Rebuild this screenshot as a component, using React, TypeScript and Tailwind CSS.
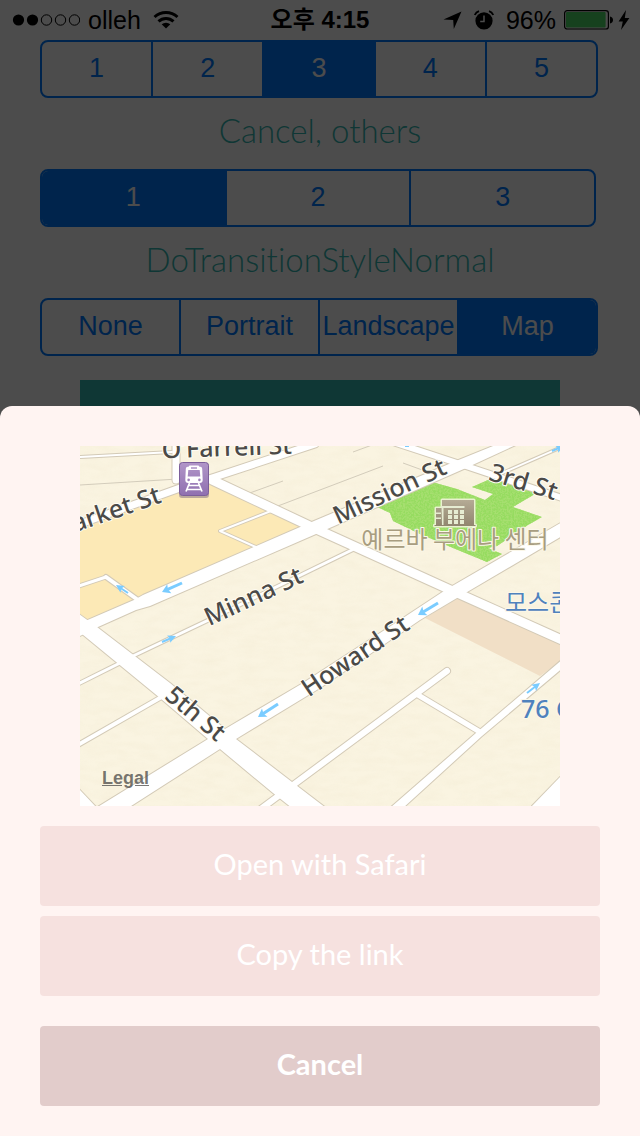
import { useState } from "react";

type Point = [number, number];

function SegmentedControl({
  label,
  options,
  initial,
  className,
}: {
  label: string;
  options: string[];
  initial: string;
  className: string;
}) {
  const [selected, setSelected] = useState(initial);
  return (
    <div
      role="group"
      aria-label={label}
      className={`flex h-[58px] overflow-hidden rounded-lg border-2 border-[#007aff] font-['Liberation_Sans',sans-serif] text-[27px] leading-8 ${className}`}
    >
      {options.map((option) => (
        <button
          key={option}
          type="button"
          aria-pressed={option === selected}
          onClick={() => setSelected(option)}
          className={`flex min-w-0 flex-1 basis-0 items-center justify-center border-r-2 border-[#007aff] pb-0.5 last:border-r-0 ${
            option === selected ? "bg-[#007aff] text-white" : "text-[#007aff]"
          }`}
        >
          {option}
        </button>
      ))}
    </div>
  );
}

function SectionTitle({ children }: { children: string }) {
  return (
    <h2 className="flex h-[71px] items-center justify-center pb-2 font-['Lato',sans-serif] text-[33px] leading-10 font-light text-[#35b7b1] [font-variant-ligatures:none]">
      {children}
    </h2>
  );
}

function StatusBar() {
  return (
    <header className="grid h-10 grid-cols-[1fr_auto_1fr] items-center font-['Liberation_Sans','Noto_Sans_CJK_KR',sans-serif] text-2xl leading-8 text-black">
      <div className="flex items-center gap-2 pl-3">
        <svg width="68" height="14" viewBox="0 0 68 14" aria-hidden="true">
          <circle cx="6.5" cy="7" r="5.6" />
          <circle cx="20.5" cy="7" r="5.6" />
          <g fill="none" stroke="currentColor">
            <circle cx="34.5" cy="7" r="5.2" />
            <circle cx="48.5" cy="7" r="5.2" />
            <circle cx="62.5" cy="7" r="5.2" />
          </g>
        </svg>
        <span className="text-[25px]">olleh</span>
        <svg width="28" height="20" viewBox="0 0 28 20" className="ml-1" aria-hidden="true">
          <g fill="none" stroke="currentColor" strokeWidth="3">
            <path d="M1.500 7a17.200 17.200 0 0 1 23 0" />
            <path d="M5.500 11.400a11 11 0 0 1 15 0" />
          </g>
          <path d="M13 18.600l-4.300-4.300a6.400 6.400 0 0 1 8.600 0z" />
        </svg>
      </div>
      <span className="font-bold">오후 4:15</span>
      <div className="flex items-center justify-end pr-2.5">
        <svg width="19" height="19" viewBox="0 0 19 19" aria-hidden="true">
          <path d="M18.5.5L10.800 18l-.6-8.900L.5 8.600z" />
        </svg>
        <svg width="20" height="20" viewBox="0 0 20 20" className="ml-3" aria-hidden="true">
          <circle cx="10" cy="10.800" r="8.600" />
          <path d="M.8 5A7 7 0 0 1 5 1.200M19.200 5A7 7 0 0 0 15 1.200" fill="none" stroke="currentColor" strokeWidth="1.800" />
          <path d="M10 5.600v5.800H6.200" fill="none" stroke="#fff" strokeWidth="1.500" />
        </svg>
        <span className="mr-2 ml-3 text-[25px]">96%</span>
        <svg width="50" height="20" viewBox="0 0 50 20" aria-hidden="true">
          <rect x=".6" y=".6" width="43.800" height="18.400" rx="2.600" fill="none" stroke="currentColor" strokeWidth="1.200" />
          <rect x="2" y="2" width="39.600" height="15.600" rx="1" fill="#4cd964" />
          <path d="M46 6.400q3 .8 3 3.500t-3 3.500z" />
        </svg>
        <svg width="12" height="20" viewBox="0 0 12 20" className="ml-1" aria-hidden="true">
          <path d="M8 0L.6 11.400h4.200L3 20l8.400-12H6.800z" />
        </svg>
      </div>
    </header>
  );
}

const thinRoads: { points: string; width: number }[] = [
  { points: "80,457 172,452", width: 2 },
  { points: "176,440 176,480", width: 7 },
  { points: "80,524 130,506 180,488 215,477 315,444", width: 7 },
  { points: "212,480 314,528 455,592 562,640", width: 9 },
  { points: "133,656 215,617 356,548", width: 3 },
  { points: "76,685 122,662", width: 3 },
  { points: "76,746 165,695", width: 4 },
  { points: "106,577 138,600", width: 4 },
  { points: "76,587 106,577", width: 3 },
  { points: "271,511 220,531 258,548", width: 2 },
  { points: "396,443 460,464 562,498", width: 6 },
  { points: "500,474 564,446", width: 2 },
  { points: "258,811 447,671", width: 6 },
  { points: "418,695 480,732", width: 5 },
];

const wideRoads = [
  "76,625 134,600 143,595 314,521 456,461 498,444 518,444 466,468 316,534 150,606 136,610 98,627 76,638",
  "96,808 208,739 225,729 303,683 400,620 447,589 564,521 564,535 457,598 420,620 320,688 236,739 220,749 128,808",
  "76,612 97,627 170,683 225,729 236,739 292,782 326,808 292,808 273,793 220,749 208,739 160,698 82,634 76,630",
  "390,808 476,733 564,658 564,667 482,736 403,808",
  "532,806 562,775 562,808 532,808",
  "78,788 97,808 78,808",
];

const arrows: { from: Point; to: Point; width: number }[] = [
  { from: [182, 583], to: [162, 592], width: 3 },
  { from: [438, 603], to: [418, 615], width: 3 },
  { from: [278, 704], to: [258, 717], width: 3 },
  { from: [128, 593], to: [116, 585], width: 2 },
  { from: [162, 642], to: [176, 636], width: 2 },
  { from: [527, 693], to: [540, 683], width: 2 },
  { from: [552, 451], to: [564, 446], width: 2 },
];

const streets: { name: string; x: number; y: number; angle: number }[] = [
  { name: "O’Farrell St", x: 227, y: 456, angle: -2 },
  { name: "Market St", x: 108, y: 521, angle: -19 },
  { name: "Mission St", x: 393, y: 499, angle: -25 },
  { name: "3rd St", x: 521, y: 490, angle: 17 },
  { name: "Minna St", x: 257, y: 604, angle: -25 },
  { name: "Howard St", x: 360, y: 663, angle: -34 },
  { name: "5th St", x: 190, y: 720, angle: 40 },
];

function DirectionArrow({ from, to, width }: { from: Point; to: Point; width: number }) {
  const length = Math.hypot(to[0] - from[0], to[1] - from[1]);
  const angle = (Math.atan2(to[1] - from[1], to[0] - from[0]) * 180) / Math.PI;
  return (
    <g transform={`translate(${from[0]} ${from[1]}) rotate(${angle})`} fill="#7accff">
      <rect x="0" y={-width / 2} width={length - 5} height={width} />
      <path d={`M${length} 0l-8 ${-width - 2}l1.5 ${width + 2}l-1.5 ${width + 2}z`} />
    </g>
  );
}

function StreetMap() {
  return (
    <svg viewBox="80 446 480 360" className="block w-full" role="img" aria-label="Street map">
      <defs>
        <filter id="paper" x="0" y="0" width="1" height="1">
          <feTurbulence type="fractalNoise" baseFrequency="0.05 0.14" numOctaves="3" seed="4" />
          <feColorMatrix values="0 0 0 0 0.91  0 0 0 0 0.85  0 0 0 0 0.68  0 0 0 1.5 -0.5" />
        </filter>
        <filter id="grass" x="0" y="0" width="1" height="1">
          <feTurbulence type="fractalNoise" baseFrequency="0.55" numOctaves="2" seed="2" result="noise" />
          <feColorMatrix in="noise" values="0 0 0 0 0.38  0 0 0 0 0.74  0 0 0 0 0.16  0 0 0 4 -1.5" result="specks" />
          <feComposite in="specks" in2="SourceGraphic" operator="in" result="blades" />
          <feMerge>
            <feMergeNode in="SourceGraphic" />
            <feMergeNode in="blades" />
          </feMerge>
        </filter>
        <linearGradient id="transit" x1="0" y1="0" x2="0" y2="1">
          <stop offset="0" stopColor="#b196c8" />
          <stop offset="1" stopColor="#9070b0" />
        </linearGradient>
        <linearGradient id="stone" x1="0" y1="0" x2="0" y2="1">
          <stop offset="0" stopColor="#b5ab95" />
          <stop offset="1" stopColor="#91866f" />
        </linearGradient>
      </defs>

      <rect x="80" y="446" width="480" height="360" fill="#faf4e1" />
      <rect x="80" y="446" width="480" height="360" filter="url(#paper)" opacity="0.6" />

      <polygon points="80,529 180,492 212,482 304,527 138,599 90,622 80,614" fill="#fce9b6" />
      <polygon points="457,598 560,643 560,662 540,676 425,618" fill="#f1dfc6" />
      <polygon
        points="375,506 423,483 432,482 457,489 485,500 493,494 472,487 497,476 540,491 513,507 542,517 528,525 497,546 488,548 502,554 487,562 453,548 420,534 393,521 390,513"
        fill="#96dc60"
        filter="url(#grass)"
      />

      <g fill="none" stroke="#d3ccbb">
        <path d="M80 485L178 479M247 494L283 481M270 509L383 466M353 452L383 441M403 463L425 471" />
      </g>
      <g fill="none" stroke="#d3cab7" strokeLinejoin="round" strokeLinecap="round">
        {thinRoads.map((road) => (
          <polyline key={road.points} points={road.points} strokeWidth={road.width + 2} />
        ))}
        {wideRoads.map((points) => (
          <polygon key={points} points={points} strokeWidth="2" />
        ))}
      </g>
      <g fill="none" stroke="#fff" strokeLinejoin="round" strokeLinecap="round">
        {thinRoads.map((road) => (
          <polyline key={road.points} points={road.points} strokeWidth={road.width} />
        ))}
      </g>
      <g fill="#fff">
        {wideRoads.map((points) => (
          <polygon key={points} points={points} />
        ))}
      </g>

      {arrows.map((arrow) => (
        <DirectionArrow key={arrow.from.join()} {...arrow} />
      ))}
      <rect x="405" y="446" width="4" height="1" fill="#7accff" />

      <g
        fontFamily="'Noto Sans', sans-serif"
        fontSize="25"
        fontWeight="500"
        fill="#4b4a48"
        stroke="#fffdf5"
        strokeWidth="2"
        strokeLinejoin="round"
        paintOrder="stroke"
        textAnchor="middle"
      >
        {streets.map((street) => (
          <text key={street.name} transform={`translate(${street.x} ${street.y}) rotate(${street.angle})`}>
            {street.name}
          </text>
        ))}
      </g>

      <g>
        <rect x="179" y="463" width="30" height="35" rx="3" fill="#6d5a7c" opacity="0.45" />
        <rect x="179.5" y="462.5" width="29" height="33" rx="3" fill="url(#transit)" stroke="#7c5f9b" />
        <path
          fillRule="evenodd"
          fill="#fff"
          d="M190 465.500h8q1 0 1.400 1.200h1q1.600 0 1.800 2l.5 11.300q0 3-3 3h-11.400q-3 0-3-3l.5-11.300q.2-2 1.800-2h1q.4-1.200 1.400-1.200zM188.300 470l-.6 6.400h12.600l-.6-6.400zM188.600 478.600a1.300 1.300 0 1 0 .1 2.600a1.300 1.300 0 1 0-.1-2.600zM199.400 478.600a1.300 1.300 0 1 0 .1 2.600a1.300 1.300 0 1 0-.1-2.600zM191 467.300v1.400h6v-1.400z"
        />
        <path d="M189.500 483l-3.500 8.500M198.500 483l3.500 8.500M189 485.500h10M187.500 489.500h13" fill="none" stroke="#fff" strokeWidth="1.700" />
      </g>

      <g stroke="#e9f2cf" strokeWidth="3" strokeLinejoin="round" paintOrder="stroke" fill="url(#stone)">
        <path d="M442 500h32v25h1.500v1h-41v-1h1.500v-17h6z" />
      </g>
      <g fill="#e6ecd2">
        <path d="M441.500 506h23v2h-21v17h-1.500z" />
        <path d="M436 512.500h5v1.500h-5zM436 517.500h5v1.500h-5z" />
        {[448, 454, 460].map((x) =>
          [510, 515, 520].map((y) => <rect key={`${x}-${y}`} x={x} y={y} width="4" height="4" />),
        )}
      </g>

      <g
        fontFamily="'Noto Sans CJK KR', sans-serif"
        fontSize="24"
        stroke="#fbf7e8"
        strokeWidth="2"
        strokeLinejoin="round"
        paintOrder="stroke"
      >
        <text x="455" y="548" textAnchor="middle" fill="#a89d80">
          예르바 부에나 센터
        </text>
        <text x="505" y="611" fill="#4f82bd">
          모스콘
        </text>
      </g>
      <text
        x="521"
        y="718"
        fontFamily="'Noto Sans', sans-serif"
        fontSize="25"
        fontWeight="500"
        fill="#4f82bd"
        stroke="#fbf7e8"
        strokeWidth="2"
        paintOrder="stroke"
      >
        76 Gas
      </text>
    </svg>
  );
}

function ActionButton({ children, variant }: { children: string; variant: "action" | "cancel" }) {
  return (
    <button
      type="button"
      className={`h-20 w-full rounded pb-1 font-['Lato',sans-serif] text-[29px] leading-9 text-white ${
        variant === "cancel" ? "bg-[#e2cccb] font-bold" : "bg-[#f6e1df]"
      }`}
    >
      {children}
    </button>
  );
}

export default function App() {
  return (
    <div className="relative flex min-h-screen flex-col overflow-hidden bg-white">
      <StatusBar />
      <main className="flex grow flex-col">
        <SegmentedControl
          label="Button count"
          options={["1", "2", "3", "4", "5"]}
          initial="3"
          className="mr-[42px] ml-10"
        />
        <SectionTitle>Cancel, others</SectionTitle>
        <SegmentedControl label="Cancel, others" options={["1", "2", "3"]} initial="1" className="mr-11 ml-10" />
        <SectionTitle>DoTransitionStyleNormal</SectionTitle>
        <SegmentedControl
          label="Content"
          options={["None", "Portrait", "Landscape", "Map"]}
          initial="Map"
          className="mr-[42px] ml-10"
        />
        <div className="mx-20 mt-6 h-20 bg-[#35b7b1]" />
      </main>

      <div className="absolute inset-0 flex flex-col justify-end bg-black/70">
        <section
          role="dialog"
          aria-label="Map actions"
          className="flex flex-col rounded-t-xl bg-[#fff4f2] px-10 pt-10 pb-[30px]"
        >
          <div className="relative mx-10">
            <StreetMap />
            <a
              href="#legal"
              className="absolute bottom-4 left-[22px] font-['Liberation_Sans',sans-serif] text-lg leading-6 font-bold text-[#4b4a48]/75 underline"
            >
              Legal
            </a>
          </div>
          <div className="mt-5 flex flex-col gap-2.5">
            <ActionButton variant="action">Open with Safari</ActionButton>
            <ActionButton variant="action">Copy the link</ActionButton>
          </div>
          <div className="mt-[30px]">
            <ActionButton variant="cancel">Cancel</ActionButton>
          </div>
        </section>
      </div>
    </div>
  );
}
